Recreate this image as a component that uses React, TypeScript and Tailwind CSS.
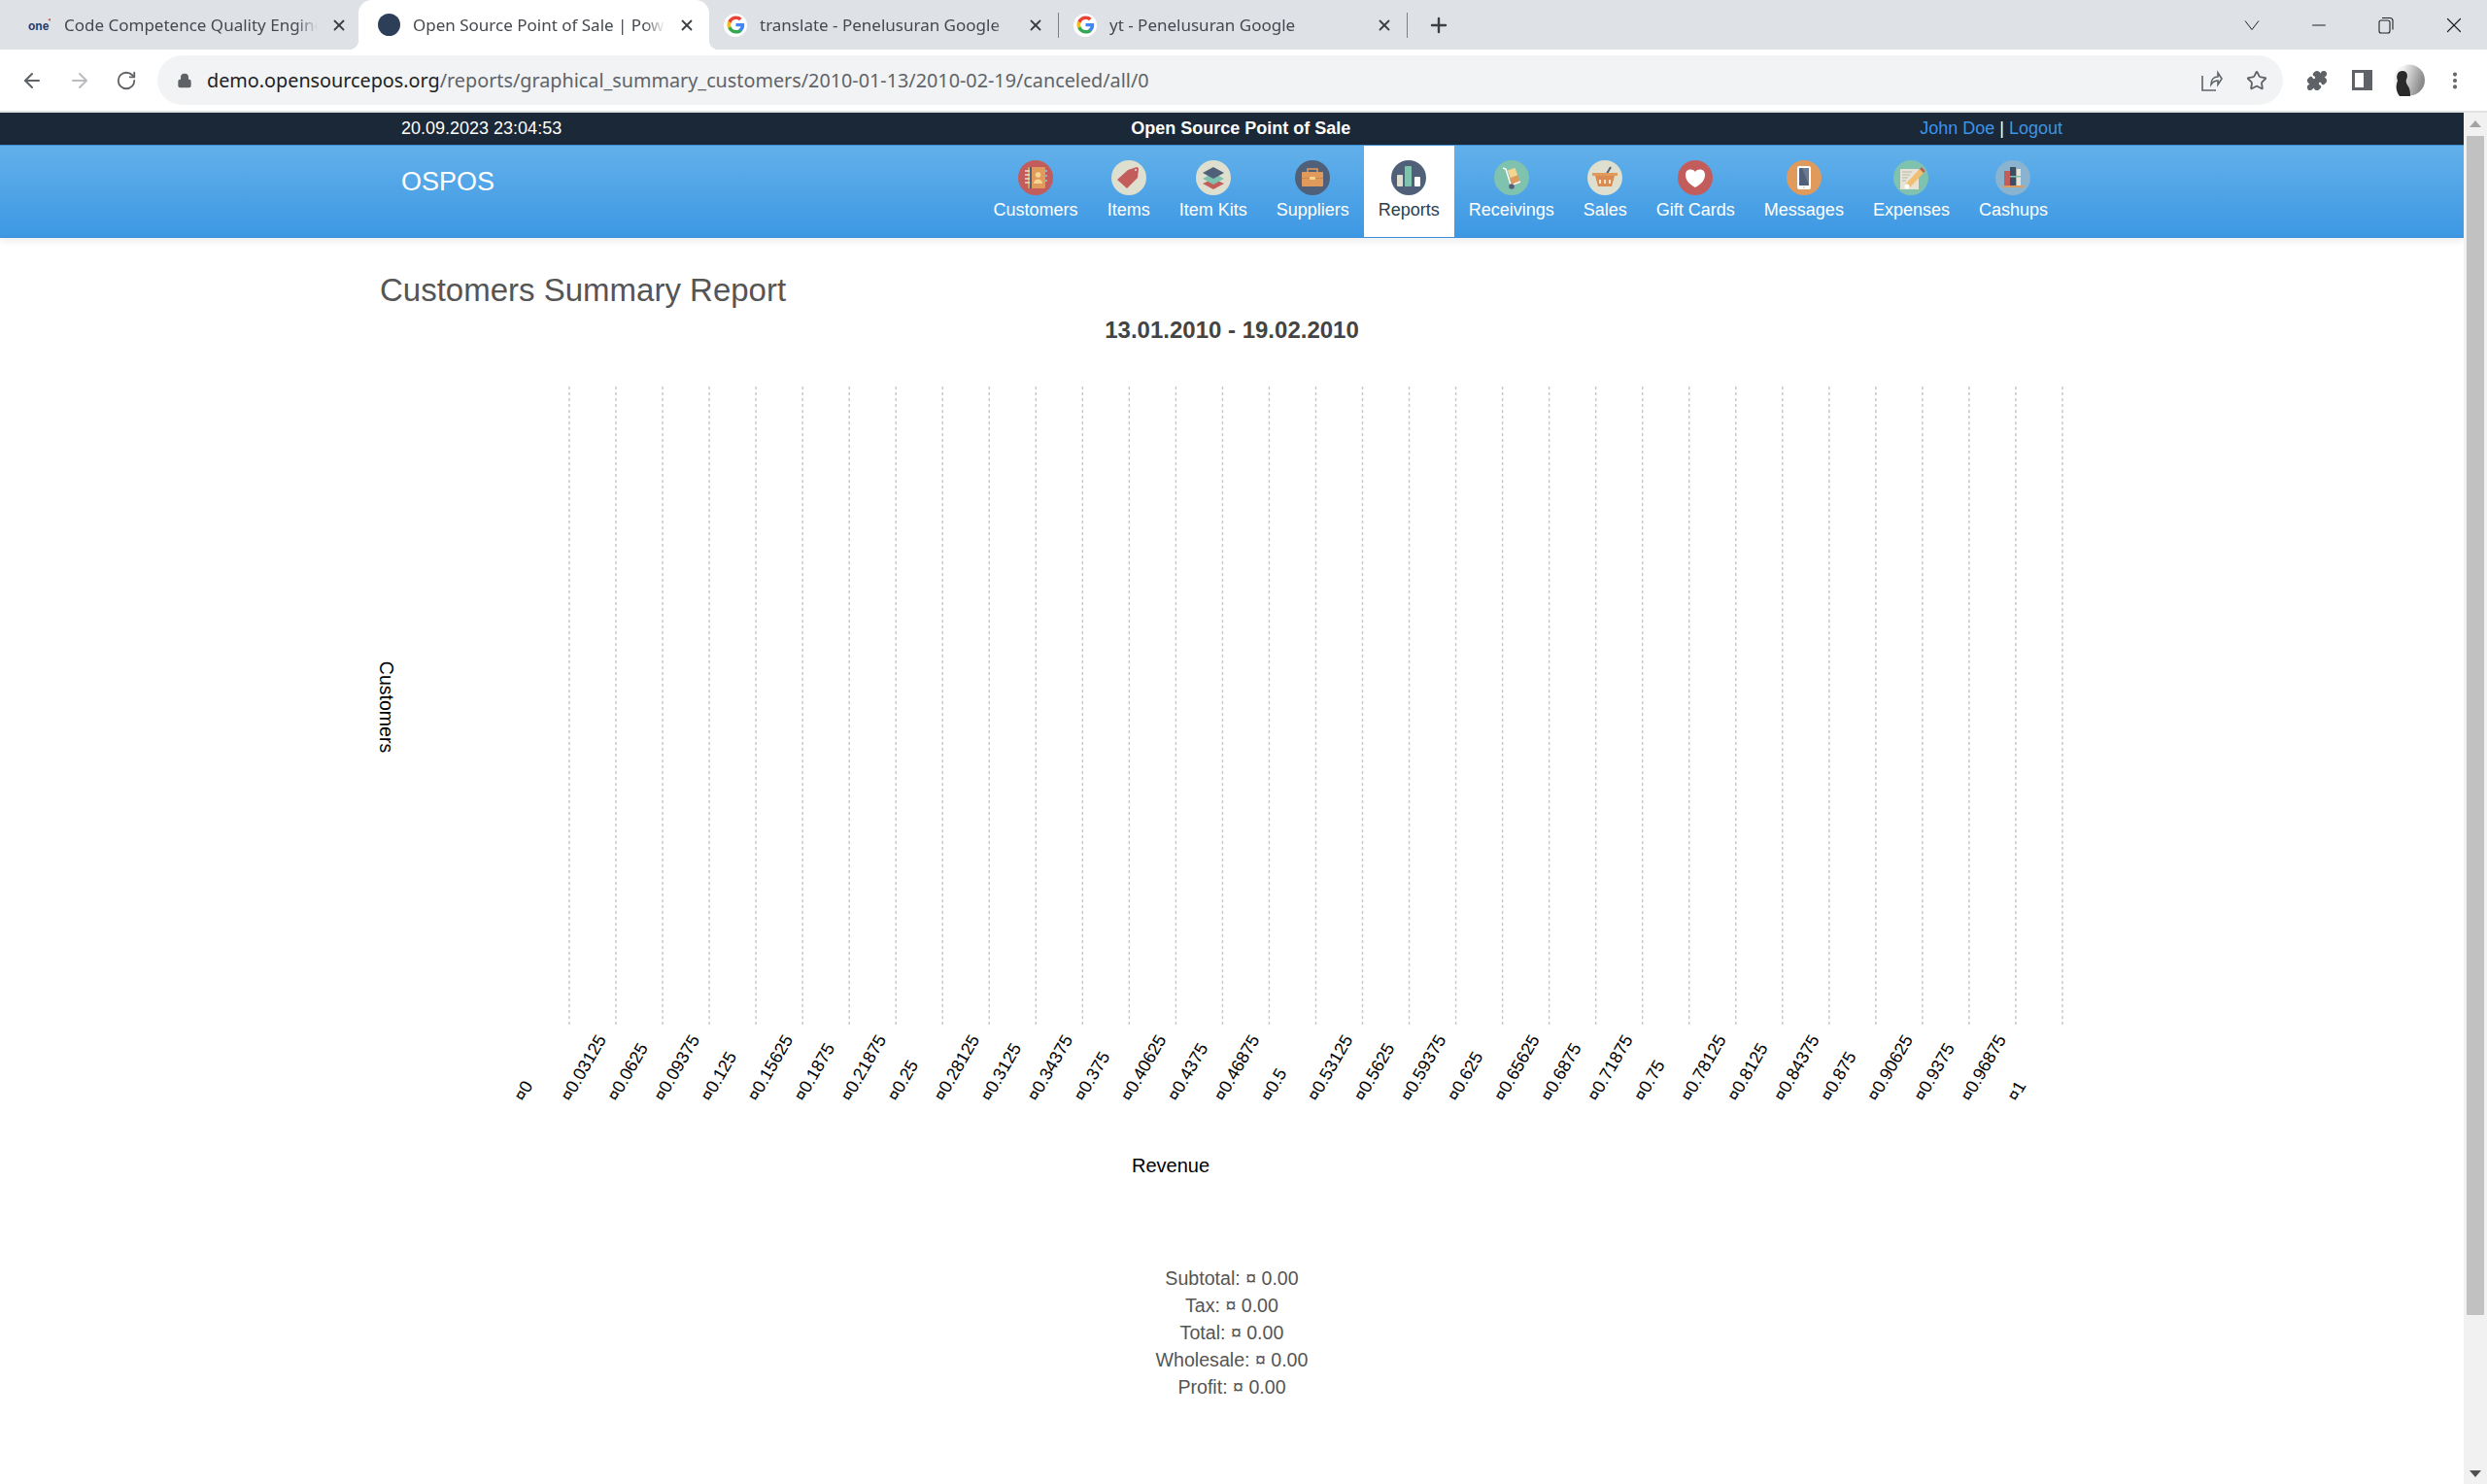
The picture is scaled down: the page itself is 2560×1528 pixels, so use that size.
import { ArrowLeft, ArrowRight, RotateCw, Lock, X, Plus, Minus, Star, Puzzle, EllipsisVertical } from "lucide-react";

const ticks = [
  "0", "0.03125", "0.0625", "0.09375", "0.125", "0.15625", "0.1875", "0.21875", "0.25", "0.28125", "0.3125",
  "0.34375", "0.375", "0.40625", "0.4375", "0.46875", "0.5", "0.53125", "0.5625", "0.59375", "0.625", "0.65625",
  "0.6875", "0.71875", "0.75", "0.78125", "0.8125", "0.84375", "0.875", "0.90625", "0.9375", "0.96875", "1",
];

const GoogleIcon = () => (
  <div className="w-[24px] h-[24px] rounded-full bg-white flex items-center justify-center shrink-0">
    <svg viewBox="0 0 24 24" className="w-[19px] h-[19px]">
      <path fill="#4285F4" d="M23 12.3c0-.8-.1-1.600-.2-2.300H12v4.300h6.200c-.3 1.400-1.100 2.600-2.300 3.400v2.800h3.700c2.100-2 3.400-4.900 3.400-8.200z" />
      <path fill="#34A853" d="M12 23.500c3.100 0 5.700-1 7.600-2.800l-3.700-2.800c-1 .7-2.300 1.100-3.900 1.100-3 0-5.500-2-6.400-4.700H1.800v2.900c1.900 3.800 5.800 6.300 10.200 6.300z" />
      <path fill="#FBBC05" d="M5.600 14.300c-.5-1.400-.5-3 0-4.500V6.900H1.800c-1.600 3.200-1.600 7 0 10.200l3.800-2.800z" />
      <path fill="#EA4335" d="M12 5c1.700 0 3.200.6 4.400 1.700l3.300-3.300C17.700 1.600 15.100.500 12 .500 7.600.500 3.700 3 1.800 6.900l3.800 2.900C6.500 7 9 5 12 5z" />
    </svg>
  </div>
);

const OneIcon = () => (
  <svg viewBox="0 0 24 14" className="w-[24px] h-[14px] shrink-0">
    <text x="0" y="12" fontFamily="Liberation Sans" fontSize="12" fontWeight="700" fill="#1d3a6b">one</text>
    <path d="M20 1l3-1v3z" fill="#e2562c" />
  </svg>
);

const Tab = ({ icon, title, active, className }: { icon: React.ReactNode; title: string; active?: boolean; className: string }) => (
  <div className={`relative flex items-center h-[51px] ${className} ${active ? "bg-white rounded-t-[14px]" : ""}`}>
    {active && (
      <>
        <div className="absolute bottom-0 -left-[10px] w-[10px] h-[10px] bg-[radial-gradient(circle_at_0_0,transparent_10px,white_10.5px)]" />
        <div className="absolute bottom-0 -right-[10px] w-[10px] h-[10px] bg-[radial-gradient(circle_at_100%_0,transparent_10px,white_10.5px)]" />
      </>
    )}
    <div className="flex items-center w-full gap-[13px]">
      <div className="w-[24px] flex justify-center shrink-0">{icon}</div>
      <div className="flex-1 min-w-0 h-[26px] leading-[26px] overflow-hidden whitespace-nowrap text-[17px] text-[#45494e] font-['Noto_Sans',sans-serif] [mask-image:linear-gradient(to_left,transparent_0,black_22px)]">
        {title}
      </div>
      <X size={18} strokeWidth={2.4} className="text-[#3c4043] shrink-0" />
    </div>
  </div>
);

const BrowserChrome = () => (
  <div className="shrink-0">
    <div className="flex items-center h-[51px] bg-[#dee1e6]">
      <div className="w-[10px]" />
      <Tab className="w-[359px] pl-[19px] pr-[11px]" icon={<OneIcon />} title="Code Competence Quality Engine" />
      <Tab className="w-[361px] pl-[19px] pr-[14px]" active icon={<div className="w-[23px] h-[23px] rounded-full bg-[#2c3e58]" />} title="Open Source Point of Sale | Powered by OSPOS" />
      <Tab className="w-[359px] pl-[15px] pr-[14px]" icon={<GoogleIcon />} title="translate - Penelusuran Google" />
      <div className="w-px h-[26px] bg-[#7c7f84]" />
      <Tab className="w-[358px] pl-[15px] pr-[14px]" icon={<GoogleIcon />} title="yt - Penelusuran Google" />
      <div className="w-px h-[26px] bg-[#7c7f84]" />
      <Plus size={24} strokeWidth={2.4} className="ml-[20px] text-[#3c4043]" />
      <div className="flex-1" />
      <div className="flex items-center text-[#222] pr-[21px]">
        <svg viewBox="0 0 16 12" className="w-[16px] h-[12px]" fill="none" stroke="#222" strokeWidth="1">
          <path d="M1 1.500l7 9 7-9" />
        </svg>
        <Minus size={22} strokeWidth={1.2} className="ml-[50px]" />
        <svg viewBox="0 0 16 18" className="w-[16px] h-[18px] ml-[50px]" fill="none" stroke="#222" strokeWidth="1.100">
          <rect x="1" y="4" width="11" height="13" rx="2" />
          <path d="M4 1.500h8a3 3 0 0 1 3 3v9" />
        </svg>
        <X size={26} strokeWidth={1.1} className="ml-[49px]" />
      </div>
    </div>
    <div className="flex items-start h-[63px] bg-white pt-[6px]">
      <div className="flex items-center h-[51px] w-[162px] pl-[21px] text-[#5f6368]">
        <ArrowLeft size={24} strokeWidth={2} />
        <ArrowRight size={24} strokeWidth={2} className="text-[#b9bbbe] ml-[25px]" />
        <RotateCw size={22} strokeWidth={2} className="ml-[25px]" />
      </div>
      <div className="flex items-center h-[51px] w-[2188px] rounded-full bg-[#f1f3f4] pl-[20px] pr-[16px]">
        <Lock size={16} fill="#5f6368" className="text-[#5f6368]" />
        <div className="ml-[15px] flex-1 text-[19.8px] font-['Noto_Sans',sans-serif] text-[#5f6368] whitespace-nowrap">
          <span className="text-[#202124]">demo.opensourcepos.org</span>/reports/graphical_summary_customers/2010-01-13/2010-02-19/canceled/all/0
        </div>
        <svg viewBox="0 0 24 24" className="w-[24px] h-[24px] mr-[24px]" fill="none" stroke="#5f6368" strokeWidth="1.600">
          <path d="M3 7v15h14M12 16c0-5 3-8 7-8V4l4 6-4 6v-4c-3 0-5 1-7 4z" />
        </svg>
        <Star size={22} strokeWidth={2} className="text-[#5f6368]" />
      </div>
      <div className="flex items-center h-[51px] text-[#5f6368] ml-[24px] gap-[25px]">
        <Puzzle size={22} fill="#5f6368" />
        <div className="w-[21px] h-[21px] border-[3px] border-[#5f6368] border-r-[9px]" />
        <svg viewBox="0 0 32 33" className="w-[32px] h-[33px] -ml-[3px]">
          <defs>
            <linearGradient id="avatar" x1="0" x2="1" y1="0" y2="0.300">
              <stop offset="0.300" stopColor="#f2f2f2" />
              <stop offset="1" stopColor="#8a8a8a" />
            </linearGradient>
          </defs>
          <circle cx="16" cy="16.500" r="16" fill="url(#avatar)" />
          <path d="M6 33C2 28 2 22 4 17 2 12 4 7 9 7c5 0 6 5 4 9-1 3 1 5 3 9 1 3 1 6 1 8z" fill="#2a2a2a" />
        </svg>
        <EllipsisVertical size={22} strokeWidth={2.5} className="-ml-[5px]" />
      </div>
    </div>
    <div className="h-[2px] bg-[#dfe1e3]" />
  </div>
);

const Disc = ({ fill, children }: { fill: string; children: React.ReactNode }) => (
  <svg viewBox="0 0 36 36" className="w-[36px] h-[36px]">
    <circle cx="18" cy="18" r="18" fill={fill} />
    {children}
  </svg>
);

const navItems: { label: string; active?: boolean; icon: React.ReactNode }[] = [
  {
    label: "Customers",
    icon: (
      <Disc fill="#c35d5c">
        <rect x="10" y="7" width="18" height="22" rx="1" fill="#e09a5c" />
        <rect x="12" y="7" width="2" height="22" fill="#506079" />
        <path d="M7 11h5M7 15h5M7 19h5M7 23h5" stroke="#e6e3d6" strokeWidth="1.500" />
        <path d="M28 11h2M28 16h2" stroke="#8ab3cf" strokeWidth="2" />
        <path d="M28 21h2" stroke="#7fc2ad" strokeWidth="2" />
        <circle cx="20.500" cy="15" r="2.800" fill="#f5d58f" />
        <path d="M16 24c0-6 9-6 9 0z" fill="#f5d58f" />
      </Disc>
    ),
  },
  {
    label: "Items",
    icon: (
      <Disc fill="#dfdfcf">
        <path d="M17 10l9-3c1 0 2 1 2 2l-1 9-11 11-10-9z" fill="#c35d5c" />
        <circle cx="25" cy="10" r="1" fill="#efd9d0" />
      </Disc>
    ),
  },
  {
    label: "Item Kits",
    icon: (
      <Disc fill="#dfdfcf">
        <path d="M18 19l11 5-11 6-11-6z" fill="#c35d5c" />
        <path d="M18 13l11 6-11 6-11-6z" fill="#7fc2ad" />
        <path d="M18 7l11 6-11 6-11-6z" fill="#506079" />
      </Disc>
    ),
  },
  {
    label: "Suppliers",
    icon: (
      <Disc fill="#506079">
        <path d="M13 13V9h10v4" fill="none" stroke="#e09a5c" strokeWidth="1.500" />
        <rect x="7" y="12" width="22" height="15" rx="1" fill="#e09a5c" />
        <rect x="7" y="18" width="22" height="1" fill="#c98a4e" />
        <rect x="15" y="17" width="6" height="3" rx="1" fill="#f5d58f" />
      </Disc>
    ),
  },
  {
    label: "Reports",
    active: true,
    icon: (
      <Disc fill="#506079">
        <rect x="6" y="15" width="6" height="12" rx="1" fill="#dfdfcf" />
        <rect x="14" y="6" width="7" height="21" rx="1" fill="#7fc2ad" />
        <rect x="24" y="17" width="6" height="10" rx="1" fill="#fff" />
      </Disc>
    ),
  },
  {
    label: "Receivings",
    icon: (
      <Disc fill="#7fc2ad">
        <path d="M9 8l3 1 5 16" fill="none" stroke="#fff" strokeWidth="1.500" />
        <rect x="15" y="9" width="8" height="8" transform="rotate(-20 19 13)" fill="#f5d58f" />
        <rect x="17" y="17" width="9" height="8" transform="rotate(-20 21 21)" fill="#e09a5c" />
        <path d="M17 26l10-4" stroke="#fff" strokeWidth="1.500" />
        <circle cx="18" cy="27" r="2.800" fill="#506079" />
      </Disc>
    ),
  },
  {
    label: "Sales",
    icon: (
      <Disc fill="#dfdfcf">
        <path d="M18 17l6-10" stroke="#506079" strokeWidth="2" />
        <rect x="5" y="13" width="26" height="3" fill="#e09a5c" />
        <path d="M8 16h20l-3 11H11z" fill="#d98b52" />
        <path d="M13 20v4M18 20v4M23 20v4" stroke="#f3e4cd" strokeWidth="2" />
      </Disc>
    ),
  },
  {
    label: "Gift Cards",
    icon: (
      <Disc fill="#c35d5c">
        <path d="M18 28C11 24 8 20 8 15c0-6 7-7 10-3 3-4 10-3 10 3 0 5-3 9-10 13z" fill="#fff" />
      </Disc>
    ),
  },
  {
    label: "Messages",
    icon: (
      <Disc fill="#e09a5c">
        <rect x="11" y="6" width="14" height="24" rx="2" fill="#fff" />
        <rect x="13" y="8" width="10" height="18" fill="#506079" />
        <path d="M16 8h7v18z" fill="#6b7a90" />
        <rect x="17" y="27" width="2" height="2" fill="#dfdfcf" />
      </Disc>
    ),
  },
  {
    label: "Expenses",
    icon: (
      <Disc fill="#7fc2ad">
        <rect x="7" y="9" width="19" height="21" fill="#e6e3d6" />
        <path d="M9 12h10M9 15h8M9 18h6M9 21h4" stroke="#b9b8a8" strokeWidth="1" />
        <path d="M13 24l-1 5 5-1 14-15-4-4z" fill="#f0c070" />
        <path d="M27 9l4 4 1.500-2-3.500-4z" fill="#c35d5c" />
        <circle cx="14" cy="27" r="2.500" fill="#fff" />
      </Disc>
    ),
  },
  {
    label: "Cashups",
    icon: (
      <Disc fill="#8ab3cf">
        <rect x="9" y="11" width="6" height="15" fill="#c35d5c" />
        <rect x="15" y="7" width="6" height="19" fill="#3f4d63" />
        <rect x="22" y="9" width="4" height="17" fill="#e6e3d6" />
        <rect x="15" y="16" width="11" height="1.500" fill="#7fc2ad" />
        <rect x="7" y="26" width="22" height="2" fill="#e09a5c" />
      </Disc>
    ),
  },
];

const Header = () => (
  <div className="shrink-0 font-['Liberation_Sans',sans-serif]">
    <div className="bg-[#1b2838] h-[33px] text-[18px] leading-[33px] text-white">
      <div className="w-[1710px] mx-auto flex justify-between">
        <div>20.09.2023 23:04:53</div>
        <div className="font-bold">Open Source Point of Sale</div>
        <div>
          <span className="text-[#3b94e4]">John Doe</span> | <span className="text-[#3b94e4]">Logout</span>
        </div>
      </div>
    </div>
    <div className="h-[96px] bg-[linear-gradient(#62b0ea,#3d98e3)] border-t border-b border-[#3c8fd8] shadow-[0_3px_8px_rgba(0,0,0,0.08)]">
      <div className="w-[1710px] mx-auto flex justify-between">
        <div className="text-[27px] text-white mt-[22px] leading-[30px]">OSPOS</div>
        <div className="flex">
          {navItems.map((item) => (
            <div
              key={item.label}
              className={`flex flex-col items-center h-[94px] px-[15px] pt-[15px] ${item.active ? "bg-white text-[#2c3e50]" : "text-white"}`}
            >
              {item.icon}
              <div className="text-[18px] leading-[22px] mt-[4px]">{item.label}</div>
            </div>
          ))}
        </div>
      </div>
    </div>
  </div>
);

const Chart = () => (
  <svg viewBox="0 0 1754 870" className="w-[1754px] h-[870px] overflow-visible" fontFamily="Liberation Sans">
    {ticks.map((t, i) => (
      <line key={t} x1={195 + i * 48.03} x2={195 + i * 48.03} y1="0" y2="660" stroke="#c8c8c8" strokeWidth="1.500" strokeDasharray="3 3" />
    ))}
    {ticks.map((t, i) => (
      <text key={t} transform={`translate(${148 + i * 48.03} 737) rotate(-60)`} fontSize="18" fill="#000">
        ¤{t}
      </text>
    ))}
    <text transform="translate(0 330) rotate(90)" textAnchor="middle" fontSize="19.5" fill="#000">
      Customers
    </text>
    <text x="814" y="809" textAnchor="middle" fontSize="20" fill="#000">
      Revenue
    </text>
  </svg>
);

export default function App() {
  return (
    <div className="flex flex-col h-screen overflow-hidden bg-white">
      <BrowserChrome />
      <div className="flex flex-1 min-h-0">
        <div className="flex-1 min-w-0 flex flex-col">
          <Header />
          <div className="w-[1754px] mx-auto font-['Liberation_Sans',sans-serif]">
            <h3 className="text-[33px] leading-[36px] text-[#555] mt-[36px]">Customers Summary Report</h3>
            <div className="text-[24px] leading-[30px] font-bold text-center text-[#444] mt-[8px]">13.01.2010 - 19.02.2010</div>
            <div className="mt-[43px]">
              <Chart />
            </div>
            <div className="text-[19.6px] leading-[28px] text-center text-[#555] mt-[34px]">
              <div>Subtotal: ¤ 0.00</div>
              <div>Tax: ¤ 0.00</div>
              <div>Total: ¤ 0.00</div>
              <div>Wholesale: ¤ 0.00</div>
              <div>Profit: ¤ 0.00</div>
            </div>
          </div>
        </div>
        <div className="w-[24px] shrink-0 bg-[#f1f1f1] flex flex-col items-center pt-[8px]">
          <div className="w-0 h-0 border-x-[6px] border-x-transparent border-b-[7px] border-b-[#a3a3a3]" />
          <div className="w-[18px] h-[1214px] bg-[#c1c1c1] mt-[9px]" />
          <div className="flex-1" />
          <div className="w-0 h-0 border-x-[6px] border-x-transparent border-t-[7px] border-t-[#505050] mb-[7px]" />
        </div>
      </div>
    </div>
  );
}
